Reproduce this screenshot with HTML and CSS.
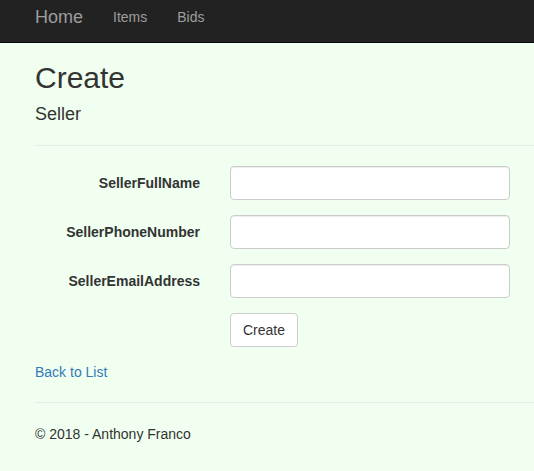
FILE: index.html
```html
<!DOCTYPE html>
<html>
<head>
<meta charset="utf-8">
<link rel="stylesheet" href="styles.css">
</head>
<body>
<nav class="navbar">
  <a class="brand" href="#">Home</a>
  <a class="nav-link" href="#">Items</a>
  <a class="nav-link" href="#">Bids</a>
</nav>
<main class="content">
  <h2 class="title">Create</h2>
  <h4 class="subtitle">Seller</h4>
  <hr class="rule">
  <form class="form">
    <div class="row">
      <label class="label">SellerFullName</label>
      <input class="input" type="text">
    </div>
    <div class="row">
      <label class="label">SellerPhoneNumber</label>
      <input class="input" type="text">
    </div>
    <div class="row">
      <label class="label">SellerEmailAddress</label>
      <input class="input" type="text">
    </div>
    <div class="row">
      <span class="label"></span>
      <button class="btn" type="button">Create</button>
    </div>
  </form>
  <a class="back" href="#">Back to List</a>
  <hr class="rule footer-rule">
  <footer class="footer">© 2018 - Anthony Franco</footer>
</main>
</body>
</html>
```
FILE: styles.css
```css
html, body {
  margin: 0;
  padding: 0;
}
body {
  background: #f0fff0;
  font-family: "Liberation Sans", Arial, sans-serif;
  font-size: 14px;
  line-height: 20px;
  color: #333;
}
.navbar {
  height: 42px;
  background: #222;
  border-bottom: 1px solid #080808;
  display: flex;
  align-items: center;
  padding-left: 35px;
  box-sizing: content-box;
}
.brand {
  font-size: 18px;
  color: #9d9d9d;
  text-decoration: none;
  margin-right: 30px;
  position: relative;
  top: -4px;
}
.nav-link {
  font-size: 14px;
  color: #9d9d9d;
  text-decoration: none;
  margin-right: 30px;
  position: relative;
  top: -4px;
}
.content {
  padding-left: 35px;
}
.title {
  font-size: 30px;
  font-weight: 500;
  line-height: 33px;
  margin: 18px 0 0;
}
.subtitle {
  font-size: 18px;
  font-weight: 500;
  line-height: 20px;
  margin: 10px 0 0;
}
.rule {
  border: 0;
  border-top: 1px solid #e3ede3;
  margin: 21px 0 0;
}
.form {
  padding-top: 20px;
}
.row {
  display: flex;
  align-items: center;
  margin-bottom: 15px;
}
.label {
  width: 165px;
  text-align: right;
  font-weight: bold;
  padding-right: 30px;
  box-sizing: content-box;
}
.input {
  width: 280px;
  height: 34px;
  box-sizing: border-box;
  border: 1px solid #ccc;
  border-radius: 4px;
  background: #fff;
  box-shadow: inset 0 1px 1px rgba(0,0,0,.075);
  padding: 6px 12px;
  font: inherit;
}
.btn {
  height: 34px;
  padding: 6px 12px;
  border: 1px solid #ccc;
  border-radius: 4px;
  background: #fff;
  color: #333;
  font: inherit;
  font-size: 14px;
  line-height: 20px;
}
.back {
  display: block;
  color: #337ab7;
  text-decoration: none;
  margin-top: 10px;
}
.footer-rule {
  margin-top: 20px;
}
.footer {
  margin-top: 21px;
}
```
